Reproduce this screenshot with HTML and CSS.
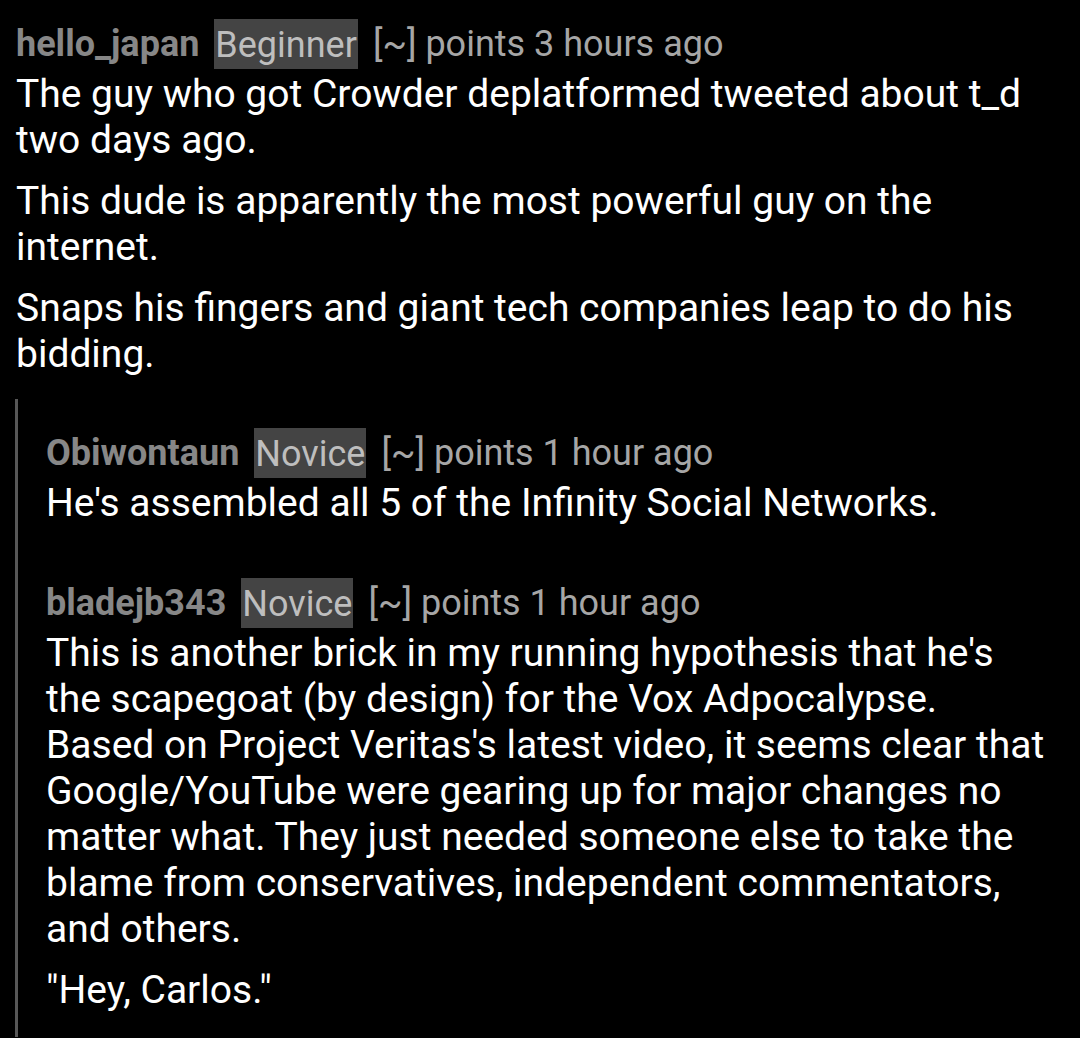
FILE: index.html
```html
<!DOCTYPE html>
<html lang="en">
<head>
    <meta charset="UTF-8">
    <meta name="viewport" content="width=device-width, initial-scale=1.0">
    <title>Comments</title>
    <link rel="stylesheet" href="styles.css">
</head>
<body>

    <div class="comment">
        <div class="meta">
            <span class="author">hello_japan</span>
            <span class="flair">Beginner</span>
            <span class="score">[~] points 3 hours ago</span>
        </div>
        <div class="body">
            <p>The guy who got Crowder deplatformed tweeted about t_d two days ago.</p>
            <p>This dude is apparently the most powerful guy on the internet.</p>
            <p>Snaps his fingers and giant tech companies leap to do his bidding.</p>
        </div>

        <div class="children">
            <div class="comment child">
                <div class="meta">
                    <span class="author">Obiwontaun</span>
                    <span class="flair">Novice</span>
                    <span class="score">[~] points 1 hour ago</span>
                </div>
                <div class="body">
                    <p>He's assembled all 5 of the Infinity Social Networks.</p>
                </div>
            </div>
            <div class="comment child">
                <div class="meta">
                    <span class="author">bladejb343</span>
                    <span class="flair">Novice</span>
                    <span class="score">[~] points 1 hour ago</span>
                </div>
                <div class="body">
                    <p>This is another brick in my running hypothesis that he's the scapegoat (by design) for the Vox Adpocalypse. Based on Project Veritas's latest video, it seems clear that Google/YouTube were gearing up for major changes no matter what. They just needed someone else to take the blame from conservatives, independent commentators, and others.</p>
                    <p>"Hey, Carlos."</p>
                </div>
            </div>
        </div>
    </div>

</body>
</html>
```

FILE: styles.css
```css
body { margin: 0; background: #000; color: #fff; font-family: Roboto, "Noto Sans", sans-serif; }
.comment { padding: 19px 35px 0 16px; }
.meta { font-size: 36px; line-height: 42px; color: #a6a6a6; display: flex; align-items: center; gap: 15px; }
.author { font-weight: bold; color: #878787; }
.flair { background: #444; color: #bebebe; padding: 5px 1px 3px 1px; }
.body { font-size: 39px; line-height: 46px; margin-top: 2px; }
.body p { margin: 0; }
.body p + p { margin-top: 15px; }
.children { border-left: 3px solid #575757; margin: 22px 0 0 -1px; }
.child { padding: 29px 0 24px 28px; }
.child + .child { padding-top: 28px; }
```
